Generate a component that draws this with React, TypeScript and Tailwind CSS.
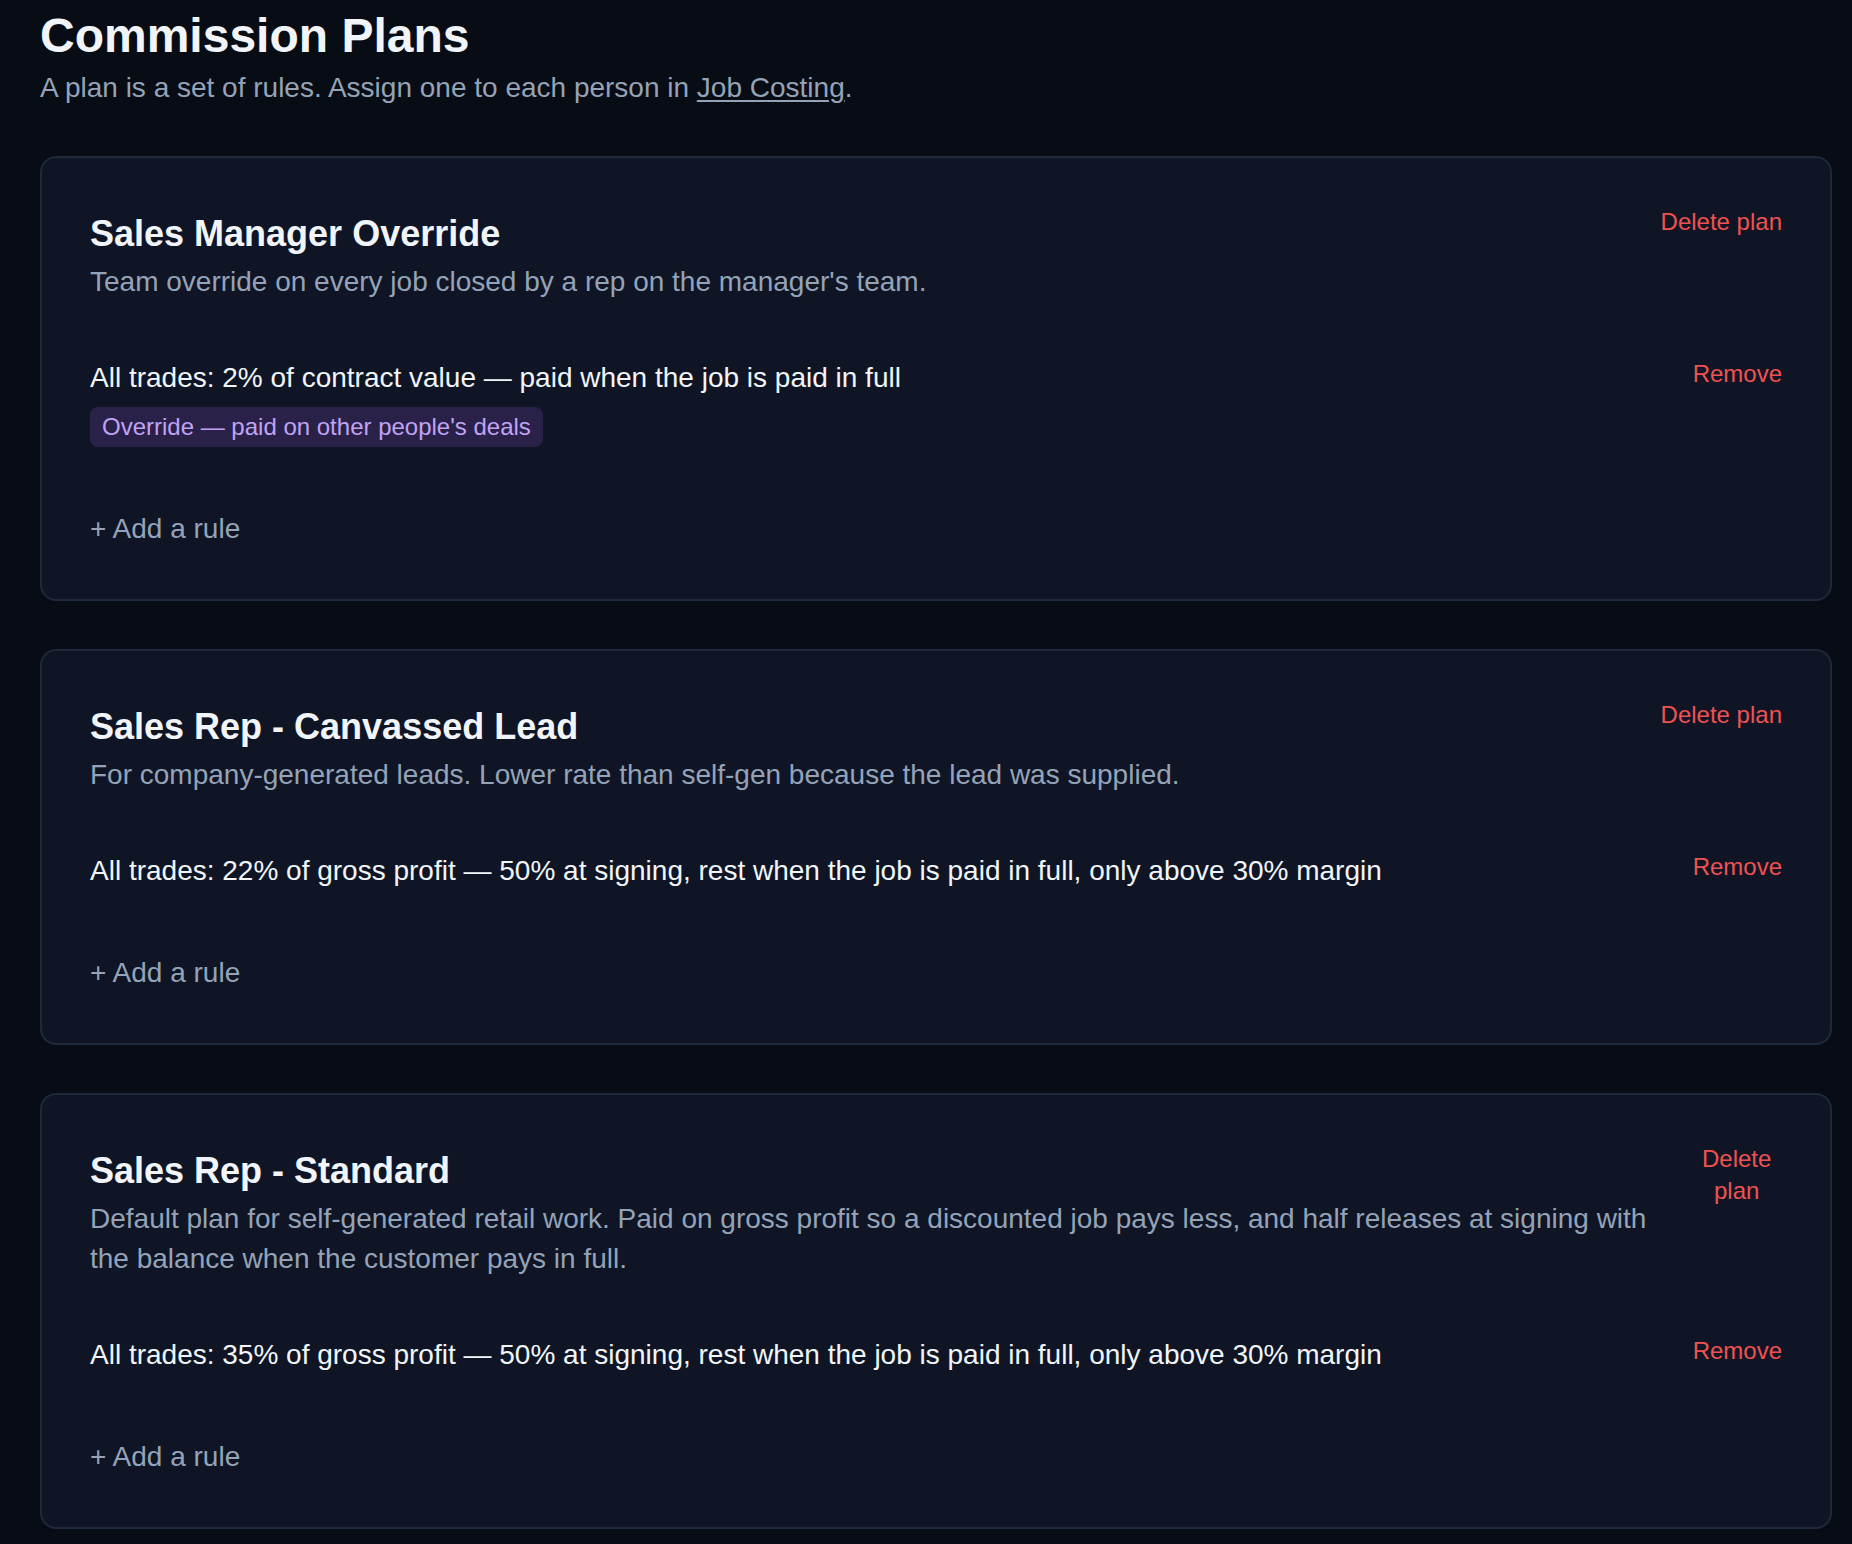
import React from "react";

type Rule = {
  text: string;
  badge?: string;
};

type Plan = {
  name: string;
  description: string;
  rules: Rule[];
};

const plans: Plan[] = [
  {
    name: "Sales Manager Override",
    description: "Team override on every job closed by a rep on the manager's team.",
    rules: [
      {
        text: "All trades: 2% of contract value — paid when the job is paid in full",
        badge: "Override — paid on other people's deals",
      },
    ],
  },
  {
    name: "Sales Rep - Canvassed Lead",
    description: "For company-generated leads. Lower rate than self-gen because the lead was supplied.",
    rules: [
      {
        text: "All trades: 22% of gross profit — 50% at signing, rest when the job is paid in full, only above 30% margin",
      },
    ],
  },
  {
    name: "Sales Rep - Standard",
    description:
      "Default plan for self-generated retail work. Paid on gross profit so a discounted job pays less, and half releases at signing with the balance when the customer pays in full.",
    rules: [
      {
        text: "All trades: 35% of gross profit — 50% at signing, rest when the job is paid in full, only above 30% margin",
      },
    ],
  },
];

function PlanCard({ plan }: { plan: Plan }) {
  return (
    <div className="rounded-[16px] border-2 border-[#1e293b] bg-[#0f1525] p-[48px]">
      {/* Header */}
      <div className="flex items-start justify-between gap-[32px]">
        <div>
          <h2 className="text-[36px] leading-[56px] font-bold text-[#f1f5f9]">{plan.name}</h2>
          <p className="text-[28px] leading-[40px] text-[#94a3b8]">{plan.description}</p>
        </div>
        <button className="text-center text-[24px] leading-[32px] text-[#f05252]">Delete plan</button>
      </div>

      {/* Rules */}
      {plan.rules.map((rule, idx) => (
        <div key={idx} className="mt-[56px] flex items-start justify-between gap-[32px]">
          <div>
            <p className="text-[28px] leading-[40px] text-[#f1f5f9]">{rule.text}</p>
            {rule.badge && (
              <div className="mt-[9px] w-fit rounded-[8px] bg-[#2a2148] px-[12px] py-[4px] text-[24px] leading-[32px] text-[#c0a3f5]">
                {rule.badge}
              </div>
            )}
          </div>
          <button className="shrink-0 text-[24px] leading-[32px] text-[#f05252]">Remove</button>
        </div>
      ))}

      <button className="mt-[62px] block pb-[2px] text-[28px] leading-[40px] text-[#94a3b8]">+ Add a rule</button>
    </div>
  );
}

export default function App() {
  return (
    <div className="min-h-screen bg-[#080c14] pt-[8px] pr-[20px] pb-[40px] pl-[40px] font-['Liberation_Sans',Arial,sans-serif]">
      <h1 className="text-[48px] leading-[56px] font-bold text-[#f1f5f9]">Commission Plans</h1>
      <p className="mt-[4px] text-[28px] leading-[40px] text-[#94a3b8]">
        A plan is a set of rules. Assign one to each person in{" "}
        <a className="underline decoration-[2px] underline-offset-[3px]">Job Costing</a>.
      </p>

      <div className="mt-[48px] flex flex-col gap-[48px]">
        {plans.map((plan) => (
          <PlanCard key={plan.name} plan={plan} />
        ))}
      </div>
    </div>
  );
}
